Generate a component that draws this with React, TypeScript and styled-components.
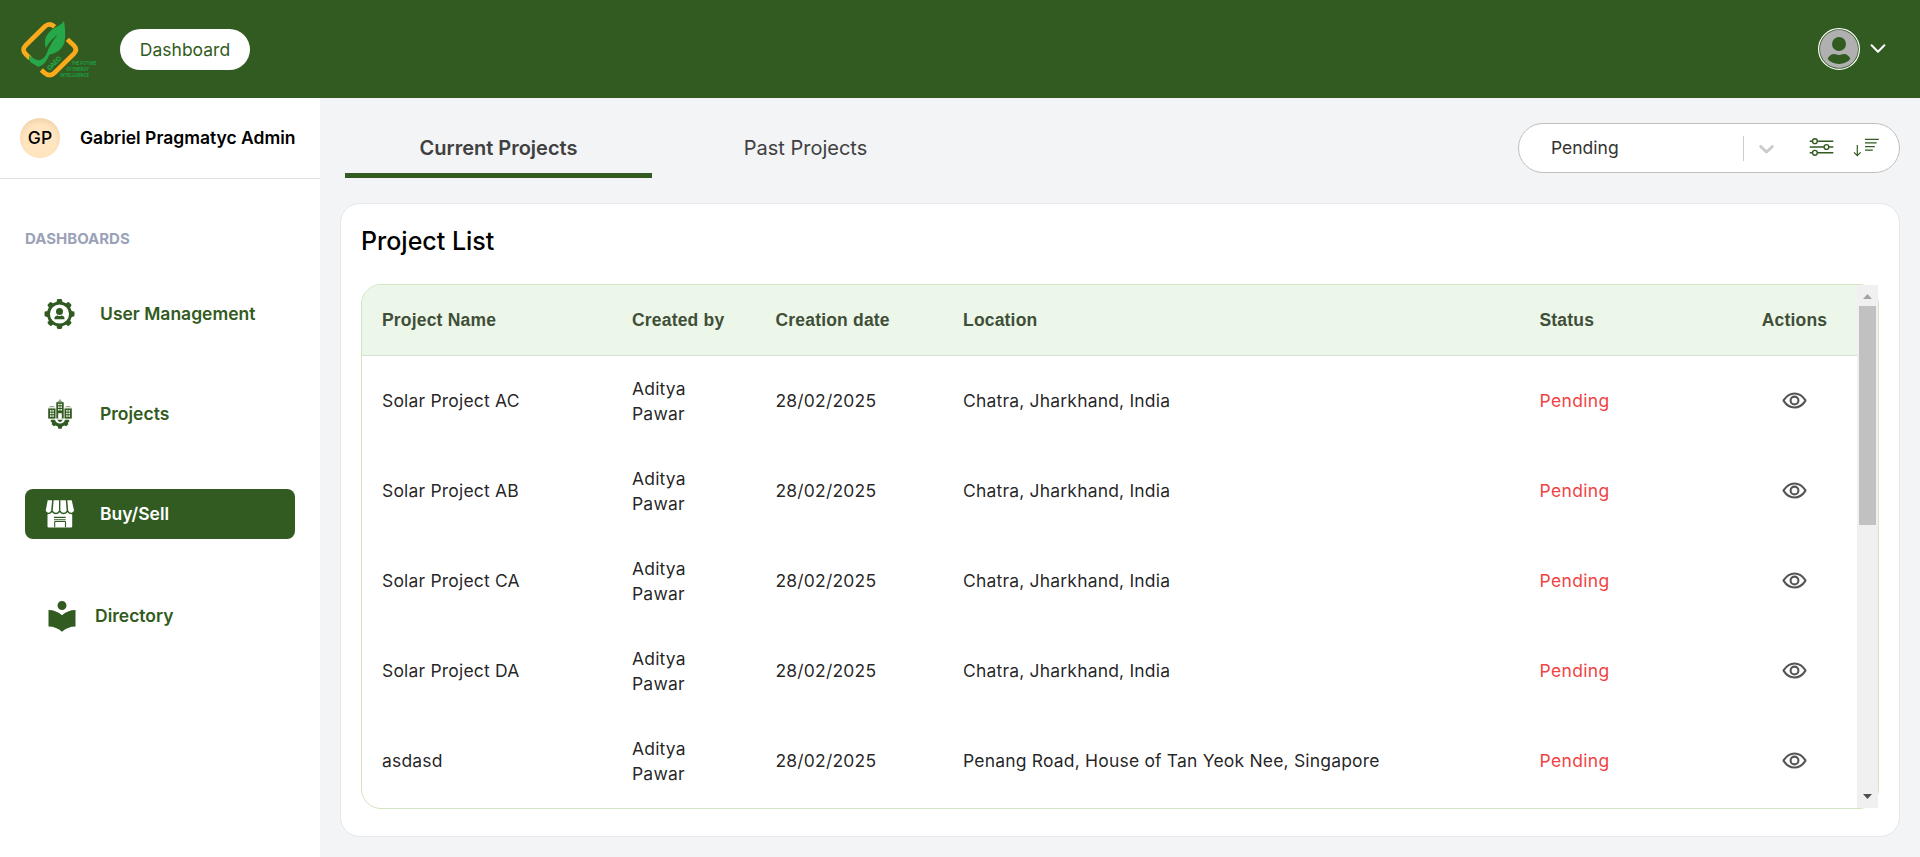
import React from 'react';
import styled, { createGlobalStyle } from 'styled-components';
import { IoEyeOutline } from 'react-icons/io5';
import { MdLocalLibrary } from 'react-icons/md';

const GREEN = '#315b20';

const GlobalStyle = createGlobalStyle`
  *, *::before, *::after { box-sizing: border-box; }
  body {
    margin: 0;
    background: #f3f4f6;
    font-family: Inter, "Liberation Sans", sans-serif;
    font-size: 17.5px;
    overflow: hidden;
  }
  svg { display: block; }
`;

const Page = styled.div`
  display: flex;
  flex-direction: column;
  height: 857px;
`;

const Header = styled.header`
  display: flex;
  align-items: center;
  flex: 0 0 98px;
  padding-left: 10px;
  background: ${GREEN};
`;

const Brand = styled.div`
  padding-top: 2px;
`;

const HeaderPill = styled.a`
  display: flex;
  align-items: center;
  justify-content: center;
  width: 130px;
  height: 41px;
  margin: 1px 0 0 10px;
  border-radius: 21px;
  background: #fff;
  color: ${GREEN};
`;

const Account = styled.div`
  display: flex;
  align-items: center;
  gap: 10px;
  margin: 0 34px 0 auto;
`;

const Body = styled.div`
  display: flex;
  flex: 1;
  min-height: 0;
`;

const Sidebar = styled.aside`
  flex: 0 0 320px;
  background: #fff;
`;

const Profile = styled.div`
  display: flex;
  align-items: center;
  gap: 20px;
  height: 81px;
  padding-left: 20px;
  border-bottom: 1px solid #e0e0e0;
  font-weight: 600;
  line-height: 20px;
  color: #000;
  white-space: nowrap;
`;

const Initials = styled.div`
  display: flex;
  align-items: center;
  justify-content: center;
  width: 40px;
  height: 40px;
  padding-bottom: 1px;
  border-radius: 50%;
  background: #ffe5c0;
  box-shadow: inset 0 3px 5px rgba(120, 80, 30, 0.12);
  font-weight: 500;
`;

const NavTitle = styled.h3`
  margin: 49px 0 0 25px;
  font-size: 15px;
  line-height: 22px;
  font-weight: 700;
  color: #9aa2b8;
`;

const Nav = styled.nav`
  display: flex;
  flex-direction: column;
  gap: 50px;
  padding: 39px 25px 0;
`;

const NavItem = styled.a<{ $active?: boolean; $offset?: number }>`
  display: flex;
  align-items: center;
  gap: ${p => (p.$offset ? 15 : 24)}px;
  height: 50px;
  margin-top: ${p => p.$offset ?? 0}px;
  padding: 0 0 ${p => (p.$offset ? 2 : 1)}px 19px;
  border-radius: 8px;
  background: ${p => (p.$active ? GREEN : 'transparent')};
  color: ${p => (p.$active ? '#fff' : GREEN)};
  font-weight: 600;
  line-height: 21px;
`;

const NavLabel = styled.span`
  padding-bottom: 1px;
`;

const Main = styled.main`
  display: flex;
  flex-direction: column;
  flex: 1;
  min-width: 0;
  padding: 25px 20px 20px;
`;

const Toolbar = styled.div`
  display: flex;
  justify-content: space-between;
  height: 55px;
  padding-left: 5px;
`;

const Tabs = styled.div`
  display: flex;
`;

const Tab = styled.button<{ $active?: boolean }>`
  width: 307px;
  height: 55px;
  padding: 0;
  border: 0;
  border-bottom: 5px solid ${p => (p.$active ? GREEN : 'transparent')};
  background: none;
  font: ${p => (p.$active ? 600 : 400)} 20px Inter, sans-serif;
  line-height: 50px;
  color: #404040;
`;

const FilterBar = styled.div`
  display: flex;
  align-items: center;
  width: 382px;
  height: 50px;
  padding: 0 20px 0 32px;
  border: 1px solid #bfbfbf;
  border-radius: 25px;
  background: #fff;
  color: #333;
`;

const FilterValue = styled.span`
  flex: 0 0 192px;
  padding-bottom: 2px;
`;

const Divider = styled.span`
  width: 1px;
  height: 25px;
  margin-right: 10px;
  background: #ccc;
`;

const IconGroup = styled.div`
  display: flex;
  gap: 19px;
  margin-left: auto;
  padding-bottom: 2px;
`;

const Card = styled.section`
  display: flex;
  flex-direction: column;
  height: 634px;
  margin-top: 25px;
  padding: 20px 20px 27px;
  border: 1px solid #e5e7eb;
  border-radius: 20px;
  background: #fff;
`;

const CardTitle = styled.h2`
  margin: 0 0 26px;
  font-size: 25px;
  line-height: 34px;
  font-weight: 500;
  color: #000;
`;

const TableFrame = styled.div`
  display: flex;
  height: 525px;
  border: 1px solid #cfe5c3;
  border-radius: 20px;
`;

const Table = styled.div`
  flex: 1;
  height: 523px;
  overflow: hidden;
  border-radius: 19px 0 0 19px;
`;

const TableRow = styled.div`
  display: grid;
  grid-template-columns: 250px 143.5px 187.5px 576.5px 1fr 125px;
  align-items: center;
  height: 90px;
  padding: 0 0 1px 20px;
  font-size: 17.5px;
  line-height: 25px;
  letter-spacing: 0.01071em;
  color: rgba(0, 0, 0, 0.87);
`;

const TableHead = styled(TableRow)`
  height: 71px;
  padding-bottom: 0;
  border-bottom: 1px solid #d9dfd6;
  background: #ecf6e9;
  font-family: "Liberation Sans", Arial, sans-serif;
  font-weight: 700;
  color: #3f4f38;
`;

const ActionsTitle = styled.span`
  text-align: center;
`;

const Person = styled.span`
  width: 70px;
`;

const Status = styled.span`
  letter-spacing: 0.02em;
  color: #f04444;
`;

const Action = styled.span`
  display: flex;
  justify-content: center;
  color: #555;

  svg path, svg circle { stroke-width: 43px; }
`;

const ScrollTrack = styled.div`
  display: flex;
  flex-direction: column;
  align-items: center;
  width: 21px;
  height: 523px;
  background: #f0f0f0;
`;

const ScrollArrow = styled.div<{ $up?: boolean }>`
  display: flex;
  align-items: center;
  justify-content: center;
  height: 21px;
  padding: ${p => (p.$up ? '2px 0 0' : '0 0 2px')};
`;

const ScrollThumb = styled.div`
  width: 17px;
  height: 219px;
  margin-bottom: auto;
  background: #c1c1c1;
`;

const Logo = () => (
  <svg width="100" height="80" viewBox="0 0 300 240">
    <g fill="none" stroke="#fbaa1c" strokeWidth="14">
      <path d="M134 50Q119 37 105 49L47 106Q34 120 47 132L60 145" />
      <path d="M172 88L192 107Q203 119 192 131L133 189Q119 202 104 189L94 180" />
    </g>
    <path
      fill="#26a84a"
      d="M162 32C157 44 137 49 122 62C104 78 102 97 108 115C112 103 125 88 144 72C130 91 117 110 112 126C104 145 94 151 85 151C75 149 66 143 57 136Q56 151 62 157L85 171Q108 162 118 134C139 130 157 117 163 98C168 78 165 51 162 32Z"
    />
    <text
      transform="translate(119 183) rotate(-45)"
      fill="#26a84a"
      fontFamily="Inter, sans-serif"
      fontSize="20"
      fontWeight="700"
      textLength="52"
    >
      GAEO
    </text>
    <g fill="#209840" fontFamily="Inter, sans-serif" fontSize="16" fontWeight="800">
      <text x="184" y="165" textLength="75" lengthAdjust="spacingAndGlyphs">THE FUTURE</text>
      <text x="169" y="184" textLength="68" lengthAdjust="spacingAndGlyphs">OF ENERGY</text>
      <text x="151" y="202" textLength="86" lengthAdjust="spacingAndGlyphs">INTELLIGENCE</text>
    </g>
  </svg>
);

const AccountIcon = () => (
  <svg width="42" height="42" viewBox="0 0 42 42">
    <circle cx="21" cy="21" r="20.4" fill="none" stroke="#fff" strokeWidth="1.2" />
    <circle cx="21" cy="21" r="19" fill="#b0b0b0" />
    <circle cx="21" cy="16" r="7" fill={GREEN} />
    <path
      fill={GREEN}
      d="M9.6 30.8C11 28.2 13 26.1 16 26.1C18 26.1 18.8 27 21 27S24 26.1 26 26.1C29 26.1 31 28.2 32.4 30.8C30 34 26 36 21 36S12 34 9.6 30.8Z"
    />
  </svg>
);

const HeaderChevron = () => (
  <svg width="16" height="12" viewBox="0 0 16 12">
    <path d="M1.6 2.3L8 8.7L14.4 2.3" fill="none" stroke="#fff" strokeWidth="2" strokeLinecap="round" strokeLinejoin="round" />
  </svg>
);

const SelectChevron = () => (
  <svg width="25" height="25" viewBox="0 0 20 20" fill="#ccc">
    <path d="M4.516 7.548c0.436-0.446 1.043-0.481 1.576 0l3.908 3.747 3.908-3.747c0.533-0.481 1.141-0.446 1.574 0 0.436 0.445 0.408 1.197 0 1.615-0.406 0.418-4.695 4.502-4.695 4.502-0.217 0.223-0.502 0.335-0.787 0.335s-0.57-0.112-0.789-0.335c0 0-4.287-4.084-4.695-4.502s-0.436-1.17 0-1.615z" />
  </svg>
);

const SlidersIcon = () => (
  <svg width="25" height="20" viewBox="0 0 25 20" fill="none" stroke={GREEN} strokeWidth="1.4">
    <path d="M.7 4.2H3.4M8.4 4.2H24.3M.7 10H15M20 10H24.3M.7 15.8H3.4M8.4 15.8H24.3" />
    <circle cx="5.9" cy="4.2" r="2.4" />
    <circle cx="17.5" cy="10" r="2.4" />
    <circle cx="5.9" cy="15.8" r="2.4" />
  </svg>
);

const SortIcon = () => (
  <svg width="26" height="20" viewBox="0 0 26 20" fill="none" stroke={GREEN} strokeWidth="1.2">
    <path d="M4.3 8V18.4M1 15.4L4.3 18.6L7.6 15.4" />
    <path d="M12 2.4H25.8M12 5.9H23.6M12 9.6H21.8M12 13.1H19.8" strokeWidth="1.4" />
  </svg>
);

const teeth = [0, 45, 90, 135, 180, 225, 270, 315];

const GearUserIcon = () => (
  <svg width="32" height="32" viewBox="0 0 32 32" fill={GREEN}>
    <circle cx="15.5" cy="16" r="11" fill="none" stroke={GREEN} strokeWidth="2.9" />
    {teeth.map(a => (
      <path key={a} transform={`rotate(${a} 15.5 16)`} d="M11.6 5.2L12.8 3.4V2.4Q12.8 1 14.2 1H16.8Q18.2 1 18.2 2.4V3.4L19.4 5.2Z" />
    ))}
    <circle cx="15.5" cy="13.5" r="3.5" />
    <path d="M10.5 21.2V19.8C10.9 18.2 12.6 17.7 13.4 17.5Q15.5 18.7 17.6 17.5C18.4 17.7 20.1 18.2 20.5 19.8V21.2Z" />
  </svg>
);

const windowsAt = (x: number, y: number, rows: number) =>
  Array.from({ length: rows * 2 }, (_, i) => (
    <rect key={`${x}-${i}`} x={x + (i % 2) * 2.3} y={y + Math.floor(i / 2) * 2.6} width="1.5" height="1.5" fill="#fff" />
  ));

const ProjectsIcon = () => (
  <svg width="32" height="32" viewBox="0 0 32 32" fill={GREEN}>
    <path d="M15 2.3L16 1L17 2.3V3H18.3V4H13.7V3H15Z" opacity=".55" />
    <rect x="12.3" y="4.2" width="7.4" height="16.3" />
    <rect x="4.2" y="10.6" width="7.3" height="10" />
    <rect x="20.5" y="10.6" width="7.3" height="10" />
    <path d="M5.7 7.9H10.1V8.8H5.7ZM21.9 7.9H26.3V8.8H21.9Z" opacity=".7" />
    <path d="M4 9.7H11.6V10.6H4ZM20.4 9.7H28V10.6H20.4Z" opacity=".5" />
    {windowsAt(14.1, 5.8, 3)}
    {windowsAt(6, 12.1, 3)}
    {windowsAt(22.2, 12.1, 3)}
    <rect x="14.2" y="15.2" width="3.6" height="5.6" fill="#fff" />
    <path d="M6.8 21.8H11A5.2 5.2 0 0 0 21 21.8H25.2V23.8L23.9 24.4L24.3 26.2L22.2 28.2L20.4 27.6L18.3 28.5L17.6 30.8H14.4L13.7 28.5L11.6 27.6L9.8 28.2L7.7 26.2L8.1 24.4L6.8 23.8Z" />
    <path d="M13.2 21.8H18.8Q16 26.4 13.2 21.8Z" />
  </svg>
);

const StoreIcon = () => (
  <svg width="32" height="32" viewBox="0 0 32 32" fill="#fff">
    <path d="M3.7 2.3H8.1L7.2 12.2Q6.3 15 4 14.7Q1.6 14.2 1.9 11.8Z" />
    <path d="M9.6 2.3H15V12.2Q14.2 14.8 11.8 14.8Q9.1 14.6 8.8 12.2Z" />
    <path d="M16.4 2.3H21.8L22.6 12.2Q22 14.8 19.6 14.8Q17.2 14.7 16.4 12.2Z" />
    <path d="M23.3 2.3H27.7L29.9 11.8Q30.2 14.2 27.7 14.7Q25.2 15 24.2 12.2Z" />
    <path d="M3.5 16.2Q6.4 16.4 8 14.2Q9.6 16.4 12 16.3Q14.2 16.2 15.7 14.2Q17.3 16.4 19.6 16.3Q22 16.2 23.4 14.2Q25.2 16.4 28.2 16.2V28.4Q28.2 29.5 27.1 29.5H4.6Q3.5 29.5 3.5 28.4Z" />
    <path d="M10 19.7H21.7M10 22H21.7M10.7 29.5V24.2Q10.7 23.8 11.2 23.8H21Q21.5 23.8 21.5 24.2V29.5" transform="translate(0 -.3)" fill="none" stroke={GREEN} strokeWidth="1.1" />
  </svg>
);

const navItems = [
  { label: 'User Management', icon: <GearUserIcon /> },
  { label: 'Projects', icon: <ProjectsIcon /> },
  { label: 'Buy/Sell', icon: <StoreIcon />, active: true },
  { label: 'Directory', icon: <MdLocalLibrary size={36} />, offset: 3 },
];

const INDIA = 'Chatra, Jharkhand, India';
const projects = [
  { name: 'Solar Project AC', location: INDIA },
  { name: 'Solar Project AB', location: INDIA },
  { name: 'Solar Project CA', location: INDIA },
  { name: 'Solar Project DA', location: INDIA },
  { name: 'asdasd', location: 'Penang Road, House of Tan Yeok Nee, Singapore' },
];

export default function App() {
  return (
    <Page>
      <GlobalStyle />
      <Header>
        <Brand>
          <Logo />
        </Brand>
        <HeaderPill>Dashboard</HeaderPill>
        <Account>
          <AccountIcon />
          <HeaderChevron />
        </Account>
      </Header>
      <Body>
        <Sidebar>
          <Profile>
            <Initials>GP</Initials>
            <span>Gabriel Pragmatyc Admin</span>
          </Profile>
          <NavTitle>DASHBOARDS</NavTitle>
          <Nav>
            {navItems.map(n => (
              <NavItem key={n.label} $active={n.active} $offset={n.offset}>
                {n.icon}
                <NavLabel>{n.label}</NavLabel>
              </NavItem>
            ))}
          </Nav>
        </Sidebar>
        <Main>
          <Toolbar>
            <Tabs>
              <Tab $active>Current Projects</Tab>
              <Tab>Past Projects</Tab>
            </Tabs>
            <FilterBar>
              <FilterValue>Pending</FilterValue>
              <Divider />
              <SelectChevron />
              <IconGroup>
                <SlidersIcon />
                <SortIcon />
              </IconGroup>
            </FilterBar>
          </Toolbar>
          <Card>
            <CardTitle>Project List</CardTitle>
            <TableFrame>
              <Table>
                <TableHead>
                  <span>Project Name</span>
                  <span>Created by</span>
                  <span>Creation date</span>
                  <span>Location</span>
                  <span>Status</span>
                  <ActionsTitle>Actions</ActionsTitle>
                </TableHead>
                {projects.map(p => (
                  <TableRow key={p.name}>
                    <span>{p.name}</span>
                    <Person>Aditya Pawar</Person>
                    <span>28/02/2025</span>
                    <span>{p.location}</span>
                    <Status>Pending</Status>
                    <Action>
                      <IoEyeOutline size={25} />
                    </Action>
                  </TableRow>
                ))}
              </Table>
              <ScrollTrack>
                <ScrollArrow $up>
                  <svg width="9" height="5" viewBox="0 0 9 5"><path d="M0 5L4.5 0L9 5Z" fill="#a3a3a3" /></svg>
                </ScrollArrow>
                <ScrollThumb />
                <ScrollArrow>
                  <svg width="9" height="5" viewBox="0 0 9 5"><path d="M0 0L4.5 5L9 0Z" fill="#505050" /></svg>
                </ScrollArrow>
              </ScrollTrack>
            </TableFrame>
          </Card>
        </Main>
      </Body>
    </Page>
  );
}
